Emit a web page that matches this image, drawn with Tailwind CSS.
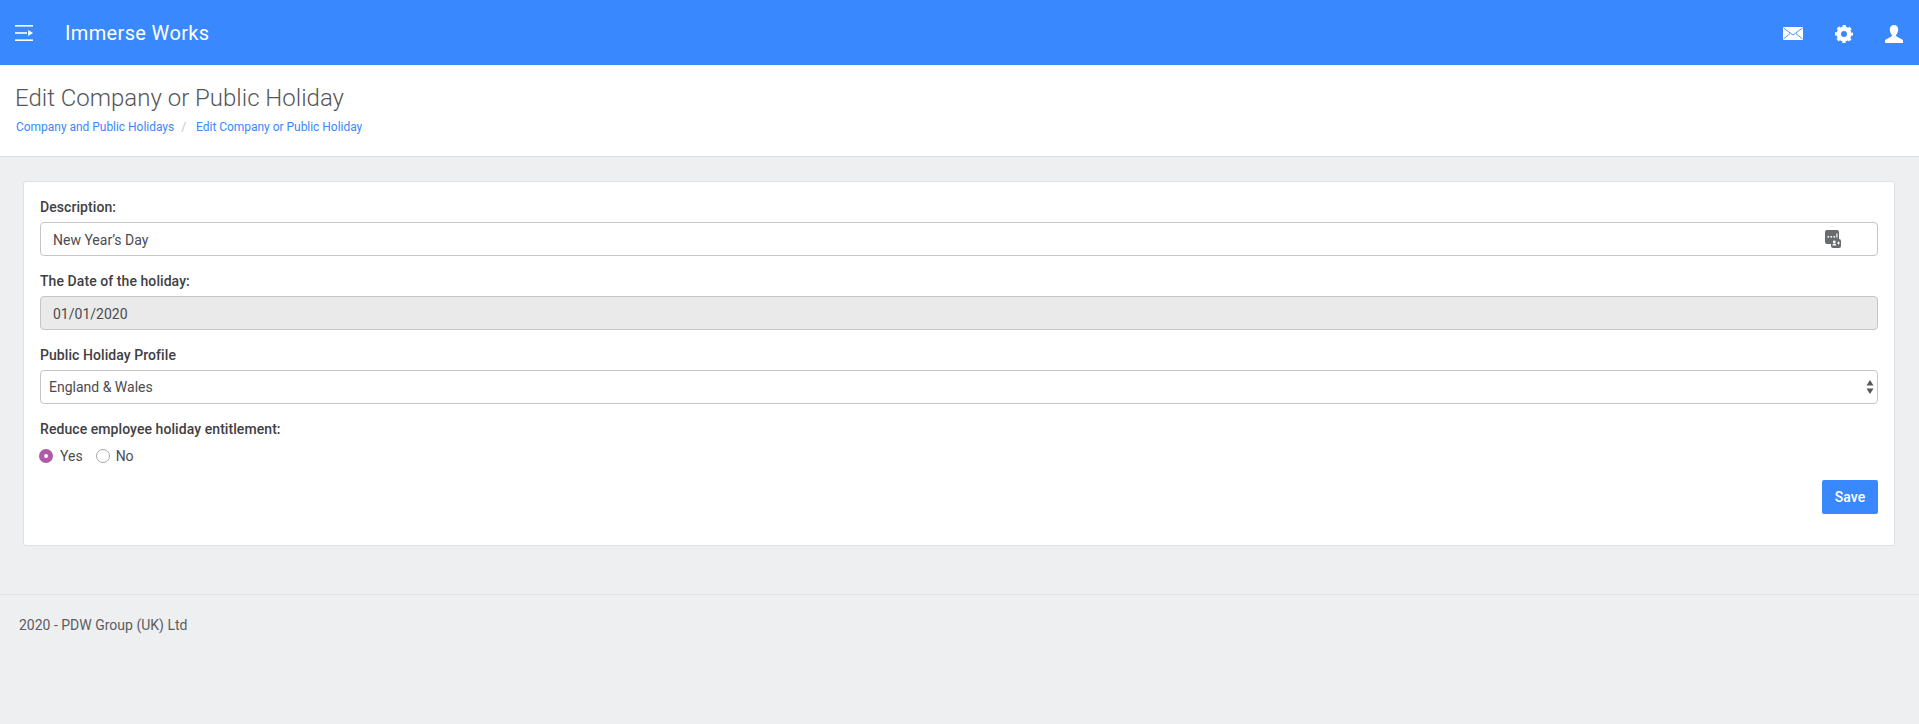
<!DOCTYPE html>
<html lang="en">
<head>
    <meta charset="UTF-8">
    <title>Edit Company or Public Holiday</title>
    <script src="https://cdn.jsdelivr.net/npm/@tailwindcss/browser@4"></script>
</head>
<body class="bg-[#eeeff1] font-['Roboto',sans-serif] text-[#4b4c50] h-[724px] overflow-hidden">
    <header class="h-[65px] bg-[#3a88fe] flex items-center text-white">
        <svg class="ml-[15px] mt-[1px] w-[18px] h-[16px]" viewBox="0 0 18 16" fill="white">
            <rect x="0" y="0" width="18" height="1.6"/>
            <rect x="0" y="7.2" width="12" height="1.6"/>
            <path d="M13.2 5 L18 8 L13.2 11Z"/>
            <rect x="0" y="14.4" width="18" height="1.6"/>
        </svg>
        <span class="ml-[32px] text-[20px] font-normal tracking-[0.35px]">Immerse Works</span>
        <div class="ml-auto mt-[2px] flex items-center gap-[32px] pr-[16px]">
            <svg class="w-[20px] h-[13px]" viewBox="0 0 20 13">
                <rect width="20" height="13" fill="white"/>
                <path d="M0.5 1 L10 8 L19.5 1 M0.5 12 L7 6.5 M19.5 12 L13 6.5" stroke="#3a88fe" stroke-width="0.9" fill="none"/>
            </svg>
            <svg class="w-[18px] h-[18px]" viewBox="0 0 24 24" fill="none" stroke="white">
                <circle cx="12" cy="12" r="7" stroke-width="6"/>
                <circle cx="12" cy="12" r="10.5" stroke-width="3" stroke-dasharray="4.4 3.846" stroke-dashoffset="2.2"/>
            </svg>
            <svg class="w-[18px] h-[18px]" viewBox="0 0 18 18" fill="white">
                <path d="M9 0c2.6 0 4.2 2 4.2 4.6 0 2.2-.9 4-1.900 5.100-.4.5-.3 1.400.4 1.800L18 15v3H0v-3l6.300-3.500c.7-.4.8-1.300.4-1.800-1-1.100-1.900-2.900-1.900-5.100C4.800 2 6.400 0 9 0z"/>
            </svg>
        </div>
    </header>

    <section class="h-[91px] bg-white border-b border-[#dcdde0] box-content pl-[15px]">
        <h1 class="pt-[19px] text-[24px] leading-[28px] font-light text-[#55565a]">Edit Company or Public Holiday</h1>
        <nav class="mt-[7px] flex items-center text-[12px] leading-[16px] tracking-[-0.03px] text-[#3a88fe]">
            <a href="#" class="ml-[1px]">Company and Public Holidays</a>
            <span class="mx-[7px] text-[#c4c5c8]">/</span>
            <a href="#" class="ml-[3px]">Edit Company or Public Holiday</a>
        </nav>
    </section>

    <main class="pl-[23px] pr-[24px] pt-[24px]">
        <form class="h-[365px] bg-white border border-[#dfe0e2] rounded-[3px] px-[16px] pt-[15px] text-[14px]">
            <label class="block font-medium leading-[20px] tracking-[0.07px] text-[#3f4044] mb-[5px]">Description:</label>
            <div class="relative">
                <input type="text" value="New Year’s Day" class="block w-full h-[34px] px-[12px] pt-[2px] bg-white border border-[#c5c5c5] rounded-[4px] text-[#4b4c50] outline-none">
                <svg class="absolute right-[37px] top-[8px] w-[16px] h-[18px]" viewBox="0 0 16 18">
                    <rect x="0" y="0" width="14" height="14" rx="2" fill="#6a6b6e"/>
                    <rect x="2.500" y="6" width="1.600" height="1.600" fill="white"/>
                    <rect x="5.500" y="6" width="1.600" height="1.600" fill="white"/>
                    <rect x="8.500" y="6" width="1.600" height="1.600" fill="white"/>
                    <rect x="11.300" y="3.500" width="1.200" height="4" fill="white"/>
                    <rect x="6" y="9" width="10" height="9" rx="2" fill="#6a6b6e"/>
                    <circle cx="9.300" cy="12" r="1.400" fill="white"/>
                    <path d="M7.300 15.500a2 2 0 0 1 4 0z" fill="white"/>
                    <path d="M12 13h3M13.500 11.500v3" stroke="white" stroke-width="0.900"/>
                </svg>
            </div>

            <label class="block mt-[15px] font-medium leading-[20px] tracking-[0.07px] text-[#3f4044] mb-[5px]">The Date of the holiday:</label>
            <input type="text" value="01/01/2020" disabled class="block w-full h-[34px] px-[12px] pt-[2px] bg-[#eaeaea] border border-[#c5c5c5] rounded-[4px] text-[#4b4c50]">

            <label class="block mt-[15px] font-medium leading-[20px] tracking-[0.07px] text-[#3f4044] mb-[5px]">Public Holiday Profile</label>
            <div class="relative h-[34px] flex items-center px-[8px] border border-[#c5c5c5] rounded-[4px] text-[#4b4c50]">
                <span>England &amp; Wales</span>
                <svg class="absolute right-[3px] top-[9px] w-[8px] h-[14px]" viewBox="0 0 8 14" fill="#55565a">
                    <path d="M4 0 L7.500 5.500 H0.500Z M0.500 8.500 H7.500 L4 14Z"/>
                </svg>
            </div>

            <label class="block mt-[15px] font-medium leading-[20px] tracking-[0.07px] text-[#3f4044]">Reduce employee holiday entitlement:</label>
            <div class="mt-[7px] flex items-center h-[20px] -ml-[1px]">
                <span class="w-[14px] h-[14px] rounded-full bg-[#b25aa8] flex items-center justify-center">
                    <span class="w-[4px] h-[4px] rounded-full bg-white"></span>
                </span>
                <span class="ml-[7px]">Yes</span>
                <span class="ml-[13px] w-[14px] h-[14px] rounded-full border border-[#a9a9a9] bg-white"></span>
                <span class="ml-[6px]">No</span>
            </div>

            <div class="mt-[14px] flex justify-end">
                <button type="button" class="w-[56px] h-[34px] bg-[#3a88fe] rounded-[2px] text-white font-medium text-[14px]">Save</button>
            </div>
        </form>
    </main>

    <footer class="mt-[48px] border-t border-[#e2e3e5] pl-[19px] pt-[20px] text-[14px] leading-[20px] text-[#5c5d61]">
        2020 - PDW Group (UK) Ltd
    </footer>
</body>
</html>
